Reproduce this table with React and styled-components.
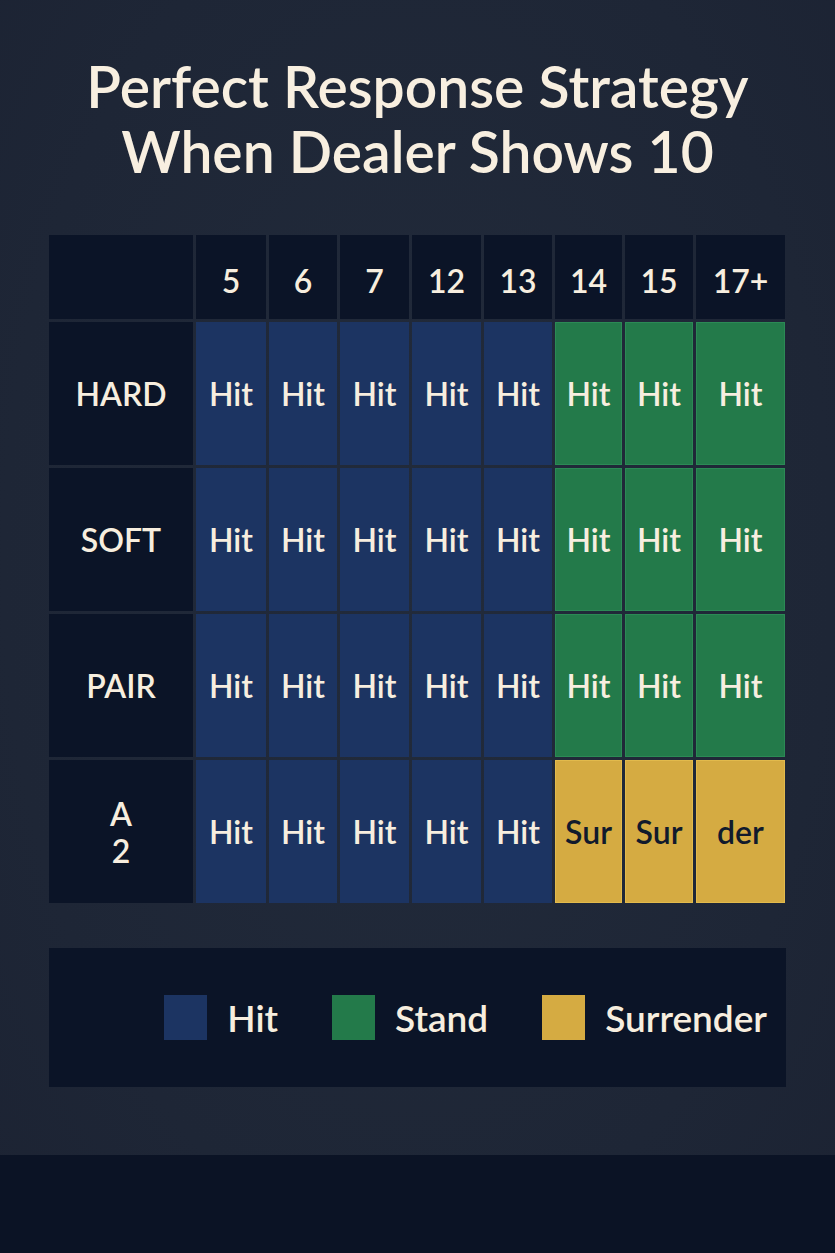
import styled, { createGlobalStyle } from 'styled-components'

const GlobalStyle = createGlobalStyle`
  html, body {
    margin: 0;
    padding: 0;
    background: #1f2838;
  }
`

const COLORS = {
  hit: '#1c3462',
  stand: '#237a4a',
  surrender: '#d5ab42',
  dark: '#0b1427',
}

const Page = styled.div`
  width: 835px;
  height: 1253px;
  display: flex;
  flex-direction: column;
  background: radial-gradient(ellipse at 50% 45%, #222b3b 0%, #1e2636 70%, #1c2333 100%);
  font-family: Lato, "Open Sans", sans-serif;
  color: #f7eedf;
  overflow: hidden;
`

const Title = styled.h1`
  margin: 0;
  padding: 54px 0 0;
  height: 235px;
  box-sizing: border-box;
  text-align: center;
  font-size: 57px;
  line-height: 65px;
  font-weight: 600;
  color: #f8efe0;
`

const Grid = styled.div`
  margin-left: 49px;
  display: grid;
  grid-template-columns: 144px 70px 68px 69px 69px 68px 67px 68px 89px;
  grid-template-rows: 84px repeat(4, 143px);
  gap: 3px;
  width: 737px;
`

const Cell = styled.div`
  display: flex;
  flex-direction: column;
  align-items: center;
  justify-content: center;
  background: ${(p) => COLORS[p.$kind] || COLORS.dark};
  color: ${(p) => (p.$kind === 'surrender' ? '#111a2c' : '#f7eedf')};
  font-size: 32px;
  font-weight: 600;
  line-height: 37px;
  box-shadow: ${(p) =>
    p.$kind === 'stand'
      ? 'inset 0 0 0 1px #2b8a55'
      : p.$kind === 'surrender'
      ? 'inset 0 0 0 1px #e2ba4c'
      : 'none'};
`

const HeadCell = styled(Cell)`
  padding-top: 6px;
  box-sizing: border-box;
`

const Legend = styled.div`
  margin: 45px 0 0 49px;
  width: 737px;
  height: 139px;
  background: #0b1427;
  display: flex;
  align-items: center;
  justify-content: flex-end;
  padding-right: 19px;
  box-sizing: border-box;
  gap: 54px;
`

const LegendItem = styled.div`
  display: flex;
  align-items: center;
  gap: 20px;
  font-size: 37px;
  font-weight: 600;
  color: #f7eedf;
`

const Swatch = styled.span`
  display: block;
  width: 43px;
  height: 45px;
  background: ${(p) => COLORS[p.$kind]};
`

const Spacer = styled.div`
  flex: 1;
`

const BottomBar = styled.div`
  height: 98px;
  background: #0b1325;
`

const headers = ['5', '6', '7', '12', '13', '14', '15', '17+']

const rows = [
  { label: 'HARD', cells: ['Hit', 'Hit', 'Hit', 'Hit', 'Hit', 'Hit', 'Hit', 'Hit'] },
  { label: 'SOFT', cells: ['Hit', 'Hit', 'Hit', 'Hit', 'Hit', 'Hit', 'Hit', 'Hit'] },
  { label: 'PAIR', cells: ['Hit', 'Hit', 'Hit', 'Hit', 'Hit', 'Hit', 'Hit', 'Hit'] },
  { label: ['A', '2'], cells: ['Hit', 'Hit', 'Hit', 'Hit', 'Hit', 'Sur', 'Sur', 'der'] },
]

const kindFor = (rowIdx, colIdx) => {
  if (colIdx < 5) return 'hit'
  return rowIdx === 3 ? 'surrender' : 'stand'
}

export default function App() {
  return (
    <>
      <GlobalStyle />
      <Page>
        <Title>
          Perfect Response Strategy
          <br />
          When Dealer Shows 10
        </Title>
        <Grid>
          <HeadCell />
          {headers.map((h) => (
            <HeadCell key={h}>{h}</HeadCell>
          ))}
          {rows.map((row, r) => (
            <Row key={r} row={row} r={r} />
          ))}
        </Grid>
        <Legend>
          <LegendItem>
            <Swatch $kind="hit" />
            Hit
          </LegendItem>
          <LegendItem>
            <Swatch $kind="stand" />
            Stand
          </LegendItem>
          <LegendItem>
            <Swatch $kind="surrender" />
            Surrender
          </LegendItem>
        </Legend>
        <Spacer />
        <BottomBar />
      </Page>
    </>
  )
}

function Row({ row, r }) {
  return (
    <>
      <Cell>
        {Array.isArray(row.label)
          ? row.label.map((l) => <span key={l}>{l}</span>)
          : row.label}
      </Cell>
      {row.cells.map((c, i) => (
        <Cell key={i} $kind={kindFor(r, i)}>
          {c}
        </Cell>
      ))}
    </>
  )
}
